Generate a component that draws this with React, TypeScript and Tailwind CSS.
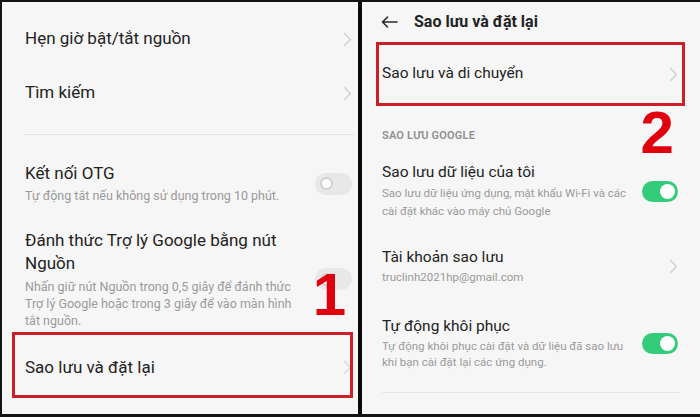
import React from "react";

function Chevron({ className = "" }: { className?: string }) {
  return (
    <svg width="9" height="15" viewBox="0 0 9 15" fill="none" className={className} aria-hidden="true">
      <path d="M1.5 1.5L7.5 7.5L1.5 13.5" stroke="currentColor" strokeWidth="1.4" strokeLinecap="round" strokeLinejoin="round" />
    </svg>
  );
}

function Toggle({ on }: { on?: boolean }) {
  if (on) {
    return (
      <div className="flex h-[21px] w-[36px] shrink-0 items-center justify-end rounded-full bg-[#33cc7a] pr-[3px]">
        <div className="h-[15px] w-[15px] rounded-full bg-white" />
      </div>
    );
  }
  return (
    <div className="flex h-[22px] w-[37px] shrink-0 items-center rounded-full bg-[#e8e8e8] pl-[5px]">
      <div className="h-[13px] w-[13px] rounded-full border-[2.5px] border-[#d2d2d2] bg-white" />
    </div>
  );
}

function Mark({ n, className }: { n: string; className: string }) {
  return (
    <span
      className={`pointer-events-none absolute font-[Liberation_Sans,Arial,sans-serif] font-black leading-none text-[#e0000e] ${className}`}
    >
      {n}
    </span>
  );
}

export default function App() {
  return (
    <div className="flex h-[417px] w-[700px] bg-[#141414] pt-[2px] pb-[3px] pl-[2px] font-[Roboto,'Noto_Sans',sans-serif] text-[#222]">
      {/* left screen */}
      <div className="relative flex w-[356px] flex-col bg-[#f6f6f6] pt-[10px]">
        <div className="flex h-[54px] shrink-0 items-center justify-between pl-[23px] pr-[6px]">
          <span className="text-[17px]">Hẹn giờ bật/tắt nguồn</span>
          <Chevron className="text-[#cfcfcf]" />
        </div>
        <div className="flex h-[54px] shrink-0 items-center justify-between pl-[23px] pr-[6px]">
          <span className="text-[17px]">Tìm kiếm</span>
          <Chevron className="text-[#cfcfcf]" />
        </div>
        <div className="mt-[14px] ml-[23px] mr-[4px] h-px shrink-0 bg-[#e4e4e4]" />

        <div className="mt-[27px] flex shrink-0 items-center justify-between pl-[23px] pr-[6px]">
          <div className="flex flex-col">
            <span className="text-[17px] leading-[22px]">Kết nối OTG</span>
            <span className="mt-[3px] text-[12.5px] leading-[18px] text-[#9a9a9a]">
              Tự động tắt nếu không sử dụng trong 10 phút.
            </span>
          </div>
          <Toggle />
        </div>

        <div className="relative mt-[24px] flex shrink-0 items-center justify-between pl-[23px] pr-[6px]">
          <div className="flex flex-col">
            <span className="text-[17px] leading-[23px]">
              Đánh thức Trợ lý Google bằng nút
              <br />
              Nguồn
            </span>
            <span className="mt-[3px] text-[12.5px] leading-[17px] text-[#9a9a9a]">
              Nhấn giữ nút Nguồn trong 0,5 giây để đánh thức
              <br />
              Trợ lý Google hoặc trong 3 giây để vào màn hình
              <br />
              tắt nguồn.
            </span>
          </div>
          <Toggle />
          <Mark n="1" className="right-[12px] top-[36px] text-[60px]" />
        </div>

        <div className="relative mt-[3px] flex h-[66px] shrink-0 items-center justify-between pt-[5px] pl-[23px] pr-[6px]">
          <span className="text-[17px]">Sao lưu và đặt lại</span>
          <Chevron className="text-[#d8d8d8]" />
          <div className="pointer-events-none absolute top-0 bottom-0 left-[10px] right-[5px] border-[3px] border-[#cd1f2a]" />
        </div>
      </div>

      {/* divider */}
      <div className="w-[4px] bg-[#0a0a0a]" />

      {/* right screen */}
      <div className="relative flex flex-1 flex-col bg-[#f6f6f6]">
        <div className="flex h-[40px] shrink-0 items-center pl-[19px]">
          <svg width="17" height="12" viewBox="0 0 17 12" fill="none" aria-hidden="true">
            <path d="M16 6H1.5M6.5 1L1.5 6L6.5 11" stroke="#2a2a2a" strokeWidth="1.6" strokeLinecap="round" strokeLinejoin="round" />
          </svg>
          <span className="ml-[16px] text-[16px] font-bold">Sao lưu và đặt lại</span>
        </div>

        <div className="relative flex h-[64px] shrink-0 items-center justify-between pl-[20px] pr-[22px]">
          <span className="text-[15.5px]">Sao lưu và di chuyển</span>
          <Chevron className="text-[#cfcfcf]" />
          <div className="pointer-events-none absolute top-0 bottom-0 left-[14px] right-[15px] border-[3px] border-[#cd1f2a]" />
        </div>

        <div className="relative mt-[22px] shrink-0 pl-[20px] text-[11px] font-semibold leading-[16px] tracking-[0.2px] text-[#8e8e8e]">
          SAO LƯU GOOGLE
          <Mark n="2" className="right-[26px] top-[-25px] text-[60px]" />
        </div>

        <div className="mt-[18px] flex shrink-0 items-center justify-between pl-[20px] pr-[22px]">
          <div className="flex flex-col">
            <span className="text-[15.5px] leading-[20px]">Sao lưu dữ liệu của tôi</span>
            <span className="mt-[2px] whitespace-nowrap text-[11.5px] leading-[18px] text-[#9a9a9a]">
              Sao lưu dữ liệu ứng dụng, mật khẩu Wi-Fi và các
              <br />
              cài đặt khác vào máy chủ Google
            </span>
          </div>
          <Toggle on />
        </div>

        <div className="mt-[27px] flex shrink-0 items-center justify-between pl-[20px] pr-[22px]">
          <div className="flex flex-col">
            <span className="text-[15.5px] leading-[20px]">Tài khoản sao lưu</span>
            <span className="mt-[2px] text-[11.5px] leading-[17px] text-[#9a9a9a]">truclinh2021hp@gmail.com</span>
          </div>
          <Chevron className="text-[#cfcfcf]" />
        </div>

        <div className="mt-[30px] flex shrink-0 items-center justify-between pl-[20px] pr-[22px]">
          <div className="flex flex-col">
            <span className="text-[15.5px] leading-[20px]">Tự động khôi phục</span>
            <span className="mt-[2px] whitespace-nowrap text-[11.5px] leading-[16px] text-[#9a9a9a]">
              Tự động khôi phục cài đặt và dữ liệu đã sao lưu
              <br />
              khi bạn cài đặt lại các ứng dụng.
            </span>
          </div>
          <Toggle on />
        </div>

        <div className="mt-[22px] ml-[20px] mr-[20px] h-px shrink-0 bg-[#e6e6e6]" />
      </div>
    </div>
  );
}
